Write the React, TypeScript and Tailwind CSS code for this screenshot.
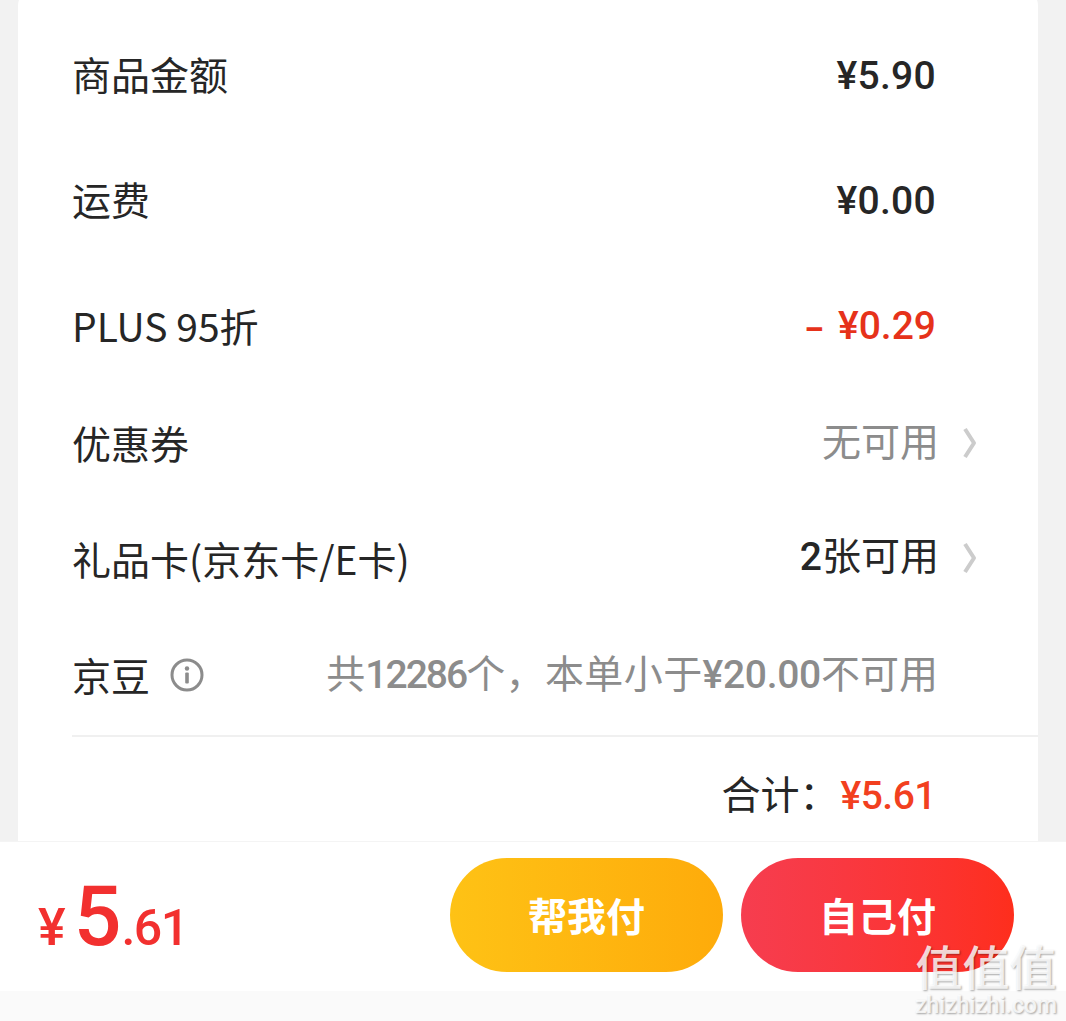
const sans = "font-['Noto_Sans_CJK_SC','Noto_Sans',sans-serif]";
const num = "font-['Roboto',sans-serif] font-medium";

function Chevron() {
  return (
    <svg width="16" height="32" viewBox="0 0 16 32" fill="none" className="ml-[22px] shrink-0">
      <path d="M4 2 L13 16 L4 30" stroke="#cccccc" strokeWidth="4" strokeLinejoin="round" />
    </svg>
  );
}

function InfoIcon() {
  return (
    <svg width="34" height="34" viewBox="0 0 34 34" fill="none" className="ml-[20px] mt-[1px] shrink-0">
      <circle cx="17" cy="17" r="15" stroke="#8c8c8c" strokeWidth="3" />
      <circle cx="17" cy="10.5" r="2.2" fill="#8c8c8c" />
      <rect x="15.2" y="14.5" width="3.6" height="11" rx="1" fill="#8c8c8c" />
    </svg>
  );
}

function PriceRow({ label, price }: { label: string; price: string }) {
  return (
    <div className="flex h-[125px] items-center justify-between pr-[102px]">
      <span className="pb-[7px]">{label}</span>
      <span className={`${num} tracking-[0.3px]`}>{price}</span>
    </div>
  );
}

export default function App() {
  return (
    <div className={`relative flex h-[1021px] w-full flex-col overflow-hidden bg-[#f2f2f2] text-[39px] leading-none text-[#262626] ${sans}`}>
      <div className="-mt-[14px] ml-[18px] mr-[28px] h-[855px] shrink-0 rounded-t-[20px] bg-white pl-[54px] pt-[28px]">
        <PriceRow label="商品金额" price="¥5.90" />
        <PriceRow label="运费" price="¥0.00" />
        <div className="flex h-[125px] items-center justify-between pr-[102px]">
          <span className="pb-[2px]">PLUS 95折</span>
          <span className={`${num} text-[#e6321a]`}>
            <span className="mr-[15px] text-[30px] font-black">–</span>¥0.29
          </span>
        </div>
        <div className="flex h-[114px] items-center justify-between pr-[61px]">
          <span className="pb-[7px]">优惠券</span>
          <div className="flex items-center pb-[7px] text-[#8c8c8c]">
            <span className="pb-[6px]">无可用</span>
            <Chevron />
          </div>
        </div>
        <div className="flex h-[117px] items-center justify-between pr-[61px]">
          <span className="pb-[7px]">礼品卡(京东卡/E卡)</span>
          <div className="flex items-center pb-[7px]">
            <span className="pb-[6px]">
              <span className={`${num} font-bold`}>2</span>张可用
            </span>
            <Chevron />
          </div>
        </div>
        <div className="flex h-[117px] items-center justify-between border-b-2 border-[#f0f0f0] pr-[100px]">
          <div className="flex items-center pb-[7px]">
            京豆
            <InfoIcon />
          </div>
          <span className="pb-[9px] text-[#8c8c8c]">
            共<span className={`${num} tracking-[-2px]`}>12286</span>
            <span className="tracking-[0.4px]">个，本单小于</span>
            <span className={`${num} tracking-[-0.3px]`}>¥20.00</span>不可用
          </span>
        </div>
        <div className="flex h-[118px] items-center justify-end pr-[102px]">
          <span className="mr-[2px] pb-[8px]">合计：</span>
          <span className={`${num} tracking-[-0.5px] text-[#f2401f]`}>¥5.61</span>
        </div>
      </div>

      <div className="flex h-[150px] shrink-0 items-center justify-between border-t border-[#f4f4f4] bg-white pb-[4px] pl-[38px] pr-[52px]">
        <div className={`${num} flex items-baseline pt-[5px] text-[#f2302f]`}>
          <span className="text-[52px]">¥</span>
          <span className="ml-[8px] text-[84px]">5</span>
          <span className="text-[50px] tracking-[-1.5px]">.61</span>
        </div>
        <div className="flex gap-[18px]">
          <button className="flex h-[114px] w-[273px] items-center justify-center rounded-full bg-gradient-to-r from-[#fec215] to-[#feab0a] font-bold text-white">
            帮我付
          </button>
          <button className="flex h-[114px] w-[273px] items-center justify-center rounded-full bg-gradient-to-r from-[#f63d4f] to-[#fe2e1c] font-bold text-white">
            自己付
          </button>
        </div>
      </div>

      <div className="flex-1 bg-[#fafafa]" />

      <div className="absolute bottom-[4px] right-[9px] flex flex-col items-center gap-[4px] font-medium text-[#ffffffd0] [text-shadow:1px_1px_2px_#00000059]">
        <span className="text-[47px] leading-[52px]">值值值</span>
        <span className="font-['Roboto',sans-serif] text-[23px] leading-[22px]">zhizhizhi.com</span>
      </div>
    </div>
  );
}
